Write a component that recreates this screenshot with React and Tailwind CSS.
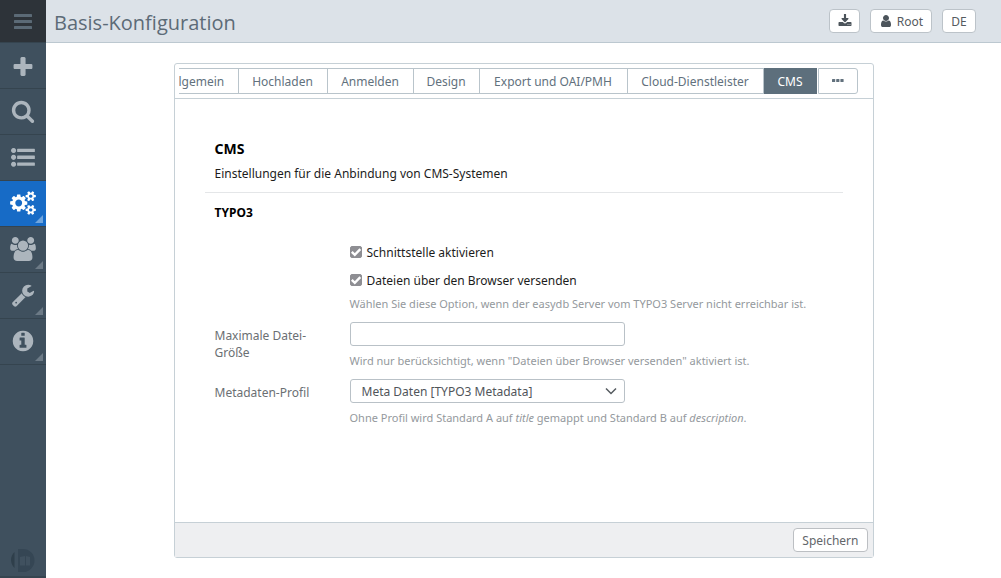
import React from "react";

const ICONS = {
  plus: {
    w: 1792,
    d: "M1600 910v192q0 40-28 68t-68 28h-416v416q0 40-28 68t-68 28h-192q-40 0-68-28t-28-68v-416h-416q-40 0-68-28t-28-68v-192q0-40 28-68t68-28h416v-416q0-40 28-68t68-28h192q40 0 68 28t28 68v416h416q40 0 68 28t28 68z",
  },
  search: {
    w: 1792,
    d: "M1216 832q0-185-131.5-316.5t-316.5-131.5-316.5 131.5-131.5 316.5 131.5 316.5 316.5 131.5 316.5-131.5 131.5-316.5zm512 832q0 52-38 90t-90 38q-54 0-90-38l-343-342q-179 124-399 124-143 0-273.5-55.5t-225-150-150-225-55.5-273.5 55.5-273.5 150-225 225-150 273.5-55.5 273.5 55.5 225 150 150 225 55.5 273.5q0 220-124 399l343 343q37 37 37 90z",
  },
  list: {
    w: 1792,
    d: "M192 220a190 190 0 1 0 .1 0zM192 731a190 190 0 1 0 .1 0zM192 1242a190 190 0 1 0 .1 0zM500 280h1240q42 0 42 42v166q0 42-42 42h-1240q-42 0-42-42v-166q0-42 42-42zM500 791h1240q42 0 42 42v166q0 42-42 42h-1240q-42 0-42-42v-166q0-42 42-42zM500 1302h1240q42 0 42 42v166q0 42-42 42h-1240q-42 0-42-42v-166q0-42 42-42z",
  },
  cogs: {
    w: 1920,
    d: "M896 896q0-106-75-181t-181-75-181 75-75 181 75 181 181 75 181-75 75-181zm768 512q0-52-38-90t-90-38-90 38-38 90q0 53 37.5 90.5t90.5 37.5 90.5-37.5 37.5-90.5zm0-1024q0-52-38-90t-90-38-90 38-38 90q0 53 37.5 90.5t90.5 37.5 90.5-37.5 37.5-90.5zm-384 421v185q0 10-7 19.5t-16 10.5l-155 24q-11 35-32 76 34 48 90 115 7 11 7 20 0 12-7 19-23 30-82.5 89.5t-78.5 59.5q-11 0-21-7l-115-90q-37 19-77 31-11 108-23 155-7 24-30 24h-186q-11 0-20-7.5t-10-17.5l-23-153q-34-10-75-31l-118 89q-7 7-20 7-11 0-21-8-144-133-144-160 0-9 7-19 10-14 41-53t47-61q-23-44-35-82l-152-24q-10-1-17-9.5t-7-19.5v-185q0-10 7-19.5t16-10.5l155-24q11-35 32-76-34-48-90-115-7-11-7-20 0-12 7-20 22-30 82-89t79-59q11 0 21 7l115 90q34-18 77-32 11-108 23-154 7-24 30-24h186q11 0 20 7.5t10 17.5l23 153q34 10 75 31l118-89q8-7 20-7 11 0 21 8 144 133 144 160 0 9-7 19-12 16-42 54t-45 60q23 48 34 82l152 23q10 2 17 10.5t7 19.5zm640 533v140q0 16-149 31-12 27-30 52 51 113 51 138 0 4-4 7-122 71-124 71-8 0-46-47t-52-68q-20 2-30 2t-30-2q-14 21-52 68t-46 47q-2 0-124-71-4-3-4-7 0-25 51-138-18-25-30-52-149-15-149-31v-140q0-16 149-31 13-29 30-52-51-113-51-138 0-4 4-7 4-2 35-20t59-34 30-16q8 0 46 46.5t52 67.5q20-2 30-2t30 2q51-71 92-112l6-2q4 0 124 70 4 3 4 7 0 25-51 138 17 23 30 52 149 15 149 31zm0-1024v140q0 16-149 31-12 27-30 52 51 113 51 138 0 4-4 7-122 71-124 71-8 0-46-47t-52-68q-20 2-30 2t-30-2q-14 21-52 68t-46 47q-2 0-124-71-4-3-4-7 0-25 51-138-18-25-30-52-149-15-149-31v-140q0-16 149-31 13-29 30-52-51-113-51-138 0-4 4-7 4-2 35-20t59-34 30-16q8 0 46 46.5t52 67.5q20-2 30-2t30 2q51-71 92-112l6-2q4 0 124 70 4 3 4 7 0 25-51 138 17 23 30 52 149 15 149 31z",
  },
  users: {
    w: 1920,
    d: "M593 896q-162 5-265 128h-134q-82 0-138-40.5t-56-118.5q0-353 124-353 6 0 43.5 21t97.5 42.5 119 21.5q67 0 133-23-5 37-5 66 0 139 81 256zm1071 637q0 120-73 189.5t-194 69.5h-874q-121 0-194-69.5t-73-189.5q0-53 3.5-103.5t14-109 26.5-108.5 43-97.5 62-81 85.5-53.5 111.5-20q10 0 43 21.5t73 48 107 48 135 21.5 135-21.5 107-48 73-48 43-21.5q61 0 111.5 20t85.5 53.5 62 81 43 97.5 26.5 108.5 14 109 3.5 103.5zm-1024-1277q0 106-75 181t-181 75-181-75-75-181 75-181 181-75 181 75 75 181zm704 384q0 159-112.5 271.5t-271.5 112.5-271.5-112.5-112.5-271.5 112.5-271.5 271.5-112.5 271.5 112.5 112.5 271.5zm576 225q0 78-56 118.5t-138 40.5h-134q-103-123-265-128 81-117 81-256 0-29-5-66 66 23 133 23 59 0 119-21.5t97.5-42.5 43.5-21q124 0 124 353zm-128-609q0 106-75 181t-181 75-181-75-75-181 75-181 181-75 181 75 75 181z",
  },
  wrench: {
    w: 1792,
    d: "M448 1472q0-26-19-45t-45-19-45 19-19 45 19 45 45 19 45-19 19-45zm644-420l-682 682q-37 37-90 37-52 0-91-37l-106-108q-38-36-38-90 0-53 38-91l681-681q39 98 114.5 173.5t173.5 114.5zm634-435q0 39-23 106-47 134-164.5 217.5t-258.5 83.5q-185 0-316.5-131.5t-131.5-316.5 131.5-316.5 316.5-131.5q58 0 121.5 16.5t107.5 46.5q16 11 16 28t-16 28l-293 169v224l193 107q5-3 79-48.5t135.5-81 70.5-35.5q15 0 23.5 10t8.5 25z",
  },
  info: {
    w: 1792,
    d: "M1152 1376v-160q0-14-9-23t-23-9h-96v-512q0-14-9-23t-23-9h-320q-14 0-23 9t-9 23v160q0 14 9 23t23 9h96v320h-96q-14 0-23 9t-9 23v160q0 14 9 23t23 9h448q14 0 23-9t9-23zm-128-896v-160q0-14-9-23t-23-9h-192q-14 0-23 9t-9 23v160q0 14 9 23t23 9h192q14 0 23-9t9-23zm640 416q0 209-103 385.5t-279.5 279.5-385.5 103-385.5-103-279.5-279.5-103-385.5 103-385.5 279.5-279.5 385.5-103 385.5 103 279.5 279.5 103 385.5z",
  },
  download: {
    w: 1792,
    d: "M1344 1344q0-26-19-45t-45-19-45 19-19 45 19 45 45 19 45-19 19-45zm256 0q0-26-19-45t-45-19-45 19-19 45 19 45 45 19 45-19 19-45zm128-224v320q0 40-28 68t-68 28h-1472q-40 0-68-28t-28-68v-320q0-40 28-68t68-28h465l135 136q58 56 136 56t136-56l136-136h464q40 0 68 28t28 68zm-380-560q17 41-14 70l-393 420q-18 19-45 19t-45-19l-393-420q-31-29-14-70 17-39 59-39h256v-500q0-26 19-45t45-19h146q26 0 45 19t19 45v500h256q42 0 59 39z",
  },
  user: {
    w: 1792,
    d: "M1536 1399q0 109-62.5 187t-150.5 78h-854q-88 0-150.5-78t-62.5-187q0-85 8.5-160.5t31.5-152 58.5-131 94-89 134.5-34.5q131 128 313 128t313-128q76 0 134.5 34.5t94 89 58.5 131 31.5 152 8.5 160.5zm-256-887q0 159-112.5 271.5t-271.5 112.5-271.5-112.5-112.5-271.5 112.5-271.5 271.5-112.5 271.5 112.5 112.5 271.5z",
  },
};

function Icon({ name, className }) {
  const icon = ICONS[name];
  return (
    <svg viewBox={`0 0 ${icon.w} 1792`} className={className} fill="currentColor" aria-hidden="true">
      <path d={icon.d} />
    </svg>
  );
}

const NAV = [
  { icon: "plus", label: "Neu", size: "size-6" },
  { icon: "search", label: "Suche", size: "size-6" },
  { icon: "list", label: "Listen", size: "size-6" },
  { icon: "cogs", label: "Basis-Konfiguration", size: "h-6 w-[26px]", menu: true, active: true },
  { icon: "users", label: "Benutzer", size: "h-6 w-[26px]", menu: true },
  { icon: "wrench", label: "Werkzeuge", size: "size-6", menu: true },
  { icon: "info", label: "Information", size: "size-6", menu: true },
];

function Sidebar() {
  return (
    <nav className="flex w-[46px] shrink-0 flex-col bg-[#3f505e] text-[#acb5bd]">
      <button aria-label="Menü" className="flex h-[43px] items-center justify-center border-b border-[#35444f] bg-[#2d3339] text-[#5b6a76]">
        <svg viewBox="0 0 18 16" className="h-4 w-[18px]" fill="currentColor" aria-hidden="true">
          <rect y="1" width="18" height="3" rx="0.6" />
          <rect y="7" width="18" height="3" rx="0.6" />
          <rect y="13" width="18" height="3" rx="0.6" />
        </svg>
      </button>
      {NAV.map((item) => (
        <button
          key={item.icon}
          aria-label={item.label}
          className={
            item.active
              ? "relative flex h-[46px] items-center justify-center border-b border-[#35444f] bg-[#176bc6] pb-[2px] text-white"
              : "relative flex h-[46px] items-center justify-center border-b border-[#35444f] pb-[2px]"
          }
        >
          <Icon name={item.icon} className={item.size} />
          {item.menu && (
            <svg
              viewBox="0 0 8 8"
              className={item.active ? "absolute right-[3px] bottom-[3px] size-2 text-[#70a5dd]" : "absolute right-[3px] bottom-[3px] size-2 text-[#6c7a86]"}
              fill="currentColor"
              aria-hidden="true"
            >
              <path d="M8 0v8H0z" />
            </svg>
          )}
        </button>
      ))}
      <div className="mt-auto flex justify-center border-b-2 border-[#364550] pb-1">
        <svg viewBox="0 0 24 24" className="size-6" aria-hidden="true">
          <path d="M3.500 4v16A11 11 0 0 1 3.500 4z" fill="#2f3f4b" />
          <path d="M7 1h5a11 11 0 0 1 0 23h-5z" fill="#354654" />
          <path d="M9 9l5-1v9.500H9zM15 8l4 1v8.500h-4z" fill="#40515f" />
        </svg>
      </div>
    </nav>
  );
}

const TABS = [
  { label: "Allgemein", width: "w-[84px]" },
  { label: "Hochladen", width: "w-[89px]" },
  { label: "Anmelden", width: "w-[86px]" },
  { label: "Design", width: "w-[66px]" },
  { label: "Export und OAI/PMH", width: "w-[148px]" },
  { label: "Cloud-Dienstleister", width: "w-[136px]" },
  { label: "CMS", width: "w-[53px]", active: true },
];

function Tabs() {
  return (
    <div className="flex gap-px border-b border-[#c6d0d6] py-1 pr-[15px] pl-1 text-[#62717d]">
      <div role="tablist" className="flex min-w-0 flex-1 justify-end overflow-hidden">
        {TABS.map((tab) => (
          <button
            key={tab.label}
            role="tab"
            aria-selected={!!tab.active}
            className={`${tab.width} ${
              tab.active
                ? "h-[26px] shrink-0 bg-[#5d6f7c] whitespace-nowrap text-white"
                : "h-[26px] shrink-0 border-y border-r border-[#b9c4cb] whitespace-nowrap"
            }`}
          >
            {tab.label}
          </button>
        ))}
      </div>
      <button aria-label="Weitere" className="flex h-[26px] w-10 items-center justify-center rounded-r-[3px] border border-[#b9c4cb]">
        <svg viewBox="0 0 12 4" className="h-1 w-3" fill="currentColor" aria-hidden="true">
          <rect width="3.200" height="3" rx="0.600" />
          <rect x="4.200" width="3.200" height="3" rx="0.600" />
          <rect x="8.400" width="3.200" height="3" rx="0.600" />
        </svg>
      </button>
    </div>
  );
}

function Check({ children }) {
  return (
    <label className="flex h-7 items-center gap-[5px] text-[#1c1c1c]">
      <span className="grid size-3 place-items-center">
        <input type="checkbox" defaultChecked className="peer col-start-1 row-start-1 size-3 appearance-none rounded-[2px] border border-[#8e8e93] checked:bg-[#8e8e93]" />
        <svg viewBox="0 0 12 12" className="pointer-events-none col-start-1 row-start-1 hidden size-3 peer-checked:block" fill="none" stroke="white" strokeWidth="2.400" aria-hidden="true">
          <path d="M1.800 5.800l3 3L10.300 3.200" />
        </svg>
      </span>
      {children}
    </label>
  );
}

function Hint({ children }) {
  return <p className="h-[21px] text-[11px] leading-5 text-[#94999d]">{children}</p>;
}

export default function App() {
  return (
    <div className="flex min-h-screen bg-white font-['Noto_Sans','Open_Sans',sans-serif] text-[12px] leading-[17px]">
      <Sidebar />
      <div className="flex min-w-0 flex-1 flex-col">
        <header className="flex h-[43px] items-center border-b border-[#bcc8d0] bg-[#dce2e8] pr-[25px] pl-2 text-[#555b60]">
          <h1 className="flex-1 pt-[3px] font-['Open_Sans','Noto_Sans',sans-serif] text-[20px] leading-7 text-[#5c6b77]">Basis-Konfiguration</h1>
          <div className="flex gap-[10px]">
            <button aria-label="Herunterladen" className="flex h-6 w-[31px] items-center justify-center rounded border border-[#bcc3c9] bg-white text-[#4c545b]">
              <Icon name="download" className="size-[14px]" />
            </button>
            <button className="flex h-6 w-[62px] items-center justify-center gap-1 rounded border border-[#bcc3c9] bg-white">
              <Icon name="user" className="size-[14px] text-[#4c545b]" />
              Root
            </button>
            <button className="h-6 w-[34px] rounded border border-[#bcc3c9] bg-white">DE</button>
          </div>
        </header>
        <main className="flex flex-1 flex-col px-4 pt-5 pb-5">
          <section className="mx-auto flex w-full max-w-[700px] flex-1 flex-col rounded-[3px] border border-[#c6d0d6]">
            <Tabs />
            <form className="flex flex-1 flex-col">
              <div className="flex-1 px-[30px] pt-10 pb-8">
                <div className="border-b border-[#e4e6e8] px-[10px] pb-2 text-black">
                  <h2 className="text-[14px] leading-5 font-bold">CMS</h2>
                  <p className="mt-[5px] leading-5 text-[#1c1c1c]">Einstellungen für die Anbindung von CMS-Systemen</p>
                </div>
                <h3 className="mt-[10px] px-[10px] leading-5 font-bold text-black">TYPO3</h3>
                <div className="mt-[15px] grid grid-cols-[135px_1fr] pl-[10px] text-[#6b6f73]">
                  <div className="col-start-2">
                    <Check>Schnittstelle aktivieren</Check>
                    <Check>Dateien über den Browser versenden</Check>
                    <Hint>Wählen Sie diese Option, wenn der easydb Server vom TYPO3 Server nicht erreichbar ist.</Hint>
                  </div>
                  <label htmlFor="max-size" className="w-[110px] pt-[12px]">
                    Maximale Datei-Größe
                  </label>
                  <div className="pt-[7px]">
                    <input id="max-size" type="text" className="block h-[24px] w-[275px] rounded-[3px] border border-[#b9c1c7] px-2" />
                    <div className="pt-[5px]">
                      <Hint>Wird nur berücksichtigt, wenn "Dateien über Browser versenden" aktiviert ist.</Hint>
                    </div>
                  </div>
                  <label htmlFor="profile" className="w-[110px] pt-[12px]">
                    Metadaten-Profil
                  </label>
                  <div className="pt-[7px]">
                    <div className="relative w-[275px]">
                      <select id="profile" className="block h-[24px] w-full appearance-none rounded-[3px] border border-[#b9c1c7] bg-white px-[11px] text-[#50555a]">
                        <option>Meta Daten [TYPO3 Metadata]</option>
                      </select>
                      <svg viewBox="0 0 12 8" className="pointer-events-none absolute top-2 right-2 h-2 w-3" fill="none" stroke="#555b60" strokeWidth="1.500" aria-hidden="true">
                        <path d="M1 1.500l5 5 5-5" />
                      </svg>
                    </div>
                    <div className="pt-[5px]">
                      <Hint>
                        Ohne Profil wird Standard A auf <em>title</em> gemappt und Standard B auf <em>description</em>.
                      </Hint>
                    </div>
                  </div>
                </div>
              </div>
              <footer className="flex h-[35px] items-center justify-end border-t border-[#c6d0d6] bg-[#eeeff1] px-[5px]">
                <button type="button" className="h-6 rounded border border-[#bcbfc3] bg-white px-2 text-[#62666a]">
                  Speichern
                </button>
              </footer>
            </form>
          </section>
        </main>
      </div>
    </div>
  );
}
